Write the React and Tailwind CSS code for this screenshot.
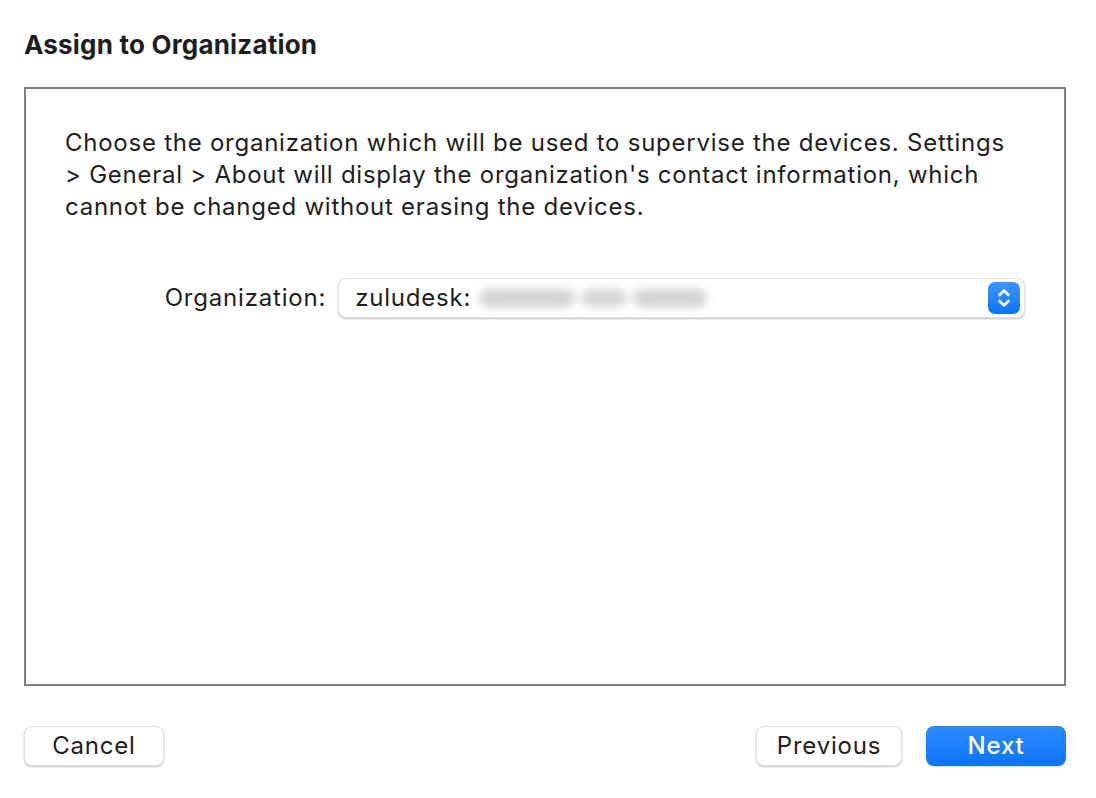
export default function App() {
    return (
        <div
            className="w-[1096px] h-[798px] bg-white text-[#1e1e1e] flex flex-col pl-6 pr-[30px]"
            style={{ fontFamily: 'Inter, "Noto Sans", sans-serif' }}
        >
            {/* TITLE */}
            <h1 className="pt-[30px] h-[87px] text-[26px] font-bold leading-[30px] tracking-[0.2px]">
                Assign to Organization
            </h1>

            {/* CONTENT BOX */}
            <div className="h-[599px] border-2 border-[#808080] px-[39px] pt-[38px]">
                <p className="text-[24px] leading-[32px] tracking-[0.75px] whitespace-nowrap">
                    Choose the organization which will be used to supervise the devices. Settings
                    <br />
                    &gt; General &gt; About will display the organization's contact information, which
                    <br />
                    cannot be changed without erasing the devices.
                </p>

                <div className="flex items-center mt-[55px]">
                    <label className="w-[274px] pr-3 text-right text-[24px] tracking-[0.8px]">Organization:</label>
                    <div className="flex items-center w-[689px] h-[40px] rounded-[8px] bg-white border border-[#e2e2e2] shadow-[0_1px_2px_rgba(0,0,0,0.25)] pl-[16px] pr-[4px]">
                        <span className="text-[24px] tracking-[0.8px]">zuludesk:</span>
                        <span className="ml-[8px] flex items-center gap-[6px] blur-[5px]">
                            <span className="h-[18px] w-[96px] rounded-full bg-[#d2d2d2]" />
                            <span className="h-[18px] w-[46px] rounded-full bg-[#d6d6d6]" />
                            <span className="h-[18px] w-[74px] rounded-full bg-[#d2d2d2]" />
                        </span>
                        <span className="ml-auto flex items-center justify-center w-[32px] h-[32px] rounded-[7px] bg-gradient-to-b from-[#3c95ff] to-[#0a73f8]">
                            <svg width="16" height="22" viewBox="0 0 16 22" fill="none" stroke="white" strokeWidth="2.6" strokeLinecap="round" strokeLinejoin="round">
                                <path d="M3.5 8 L8 3.5 L12.5 8" />
                                <path d="M3.5 14 L8 18.5 L12.5 14" />
                            </svg>
                        </span>
                    </div>
                </div>
            </div>

            {/* FOOTER BUTTONS */}
            <div className="flex items-center mt-[40px]">
                <button className="w-[140px] h-[40px] rounded-[8px] bg-white border border-[#e0e0e0] shadow-[0_1px_2px_rgba(0,0,0,0.25)] text-[24px] tracking-[0.8px]">
                    Cancel
                </button>
                <button className="ml-auto w-[146px] h-[40px] rounded-[8px] bg-white border border-[#e0e0e0] shadow-[0_1px_2px_rgba(0,0,0,0.25)] text-[24px] tracking-[0.8px]">
                    Previous
                </button>
                <button className="ml-[24px] w-[140px] h-[40px] rounded-[8px] bg-gradient-to-b from-[#2b8bff] to-[#0a74fb] text-white text-[24px] font-medium tracking-[0.8px] shadow-[0_1px_2px_rgba(0,0,0,0.15)]">
                    Next
                </button>
            </div>
        </div>
    );
}
